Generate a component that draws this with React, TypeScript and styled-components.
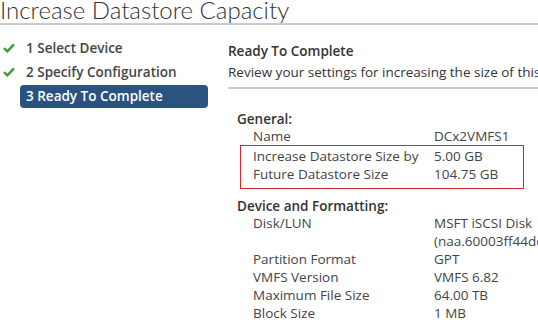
import styled, { createGlobalStyle } from 'styled-components';

const GlobalStyle = createGlobalStyle`
  html, body {
    margin: 0;
    padding: 0;
    background: #fff;
  }
  body {
    font-family: 'Open Sans', Lato, sans-serif;
    color: #333;
    overflow: hidden;
  }
`;

const Page = styled.div`
  width: 538px;
  height: 323px;
  overflow: hidden;
`;

const Title = styled.h1`
  margin: 0;
  height: 23px;
  font-family: Lato, 'Open Sans', sans-serif;
  font-size: 24px;
  font-weight: 300;
  line-height: 20px;
  color: #333;
  white-space: nowrap;
  border-bottom: 2px solid #ccc;
`;

const Body = styled.div`
  display: grid;
  grid-template-columns: 208px 1fr;
  column-gap: 20px;
`;

const Nav = styled.nav`
  display: flex;
  flex-direction: column;
  padding-top: 11px;
`;

const NavItem = styled.div`
  display: flex;
  align-items: center;
  height: 24px;
`;

const CheckSlot = styled.span`
  width: 20px;
  display: flex;
  justify-content: center;
  padding-right: 2px;
  box-sizing: border-box;
`;

const NavLabel = styled.span<{ $active?: boolean }>`
  flex: 1;
  height: 23px;
  line-height: 23px;
  padding-left: 6px;
  border-radius: 4px;
  font-size: 13.5px;
  font-weight: 600;
  color: ${(p) => (p.$active ? '#fff' : '#454545')};
  background: ${(p) => (p.$active ? '#2a5380' : 'transparent')};
  white-space: nowrap;
`;

const Content = styled.section`
  padding-top: 17px;
  min-width: 0;
`;

const Heading = styled.div`
  font-size: 13.5px;
  font-weight: 600;
  line-height: 18px;
  color: #333;
`;

const Intro = styled.div`
  margin-top: 3px;
  padding-bottom: 6px;
  font-size: 13.5px;
  line-height: 18px;
  color: #333;
  white-space: nowrap;
  border-bottom: 2px solid #ccc;
`;

const Group = styled.div<{ $gap: number }>`
  margin-top: ${(p) => p.$gap}px;
  padding-left: 9px;
`;

const GroupTitle = styled.div`
  font-size: 13.5px;
  font-weight: 600;
  line-height: 16px;
  color: #333;
`;

const Row = styled.div`
  display: grid;
  grid-template-columns: 181px 160px;
  padding-left: 16px;
  font-size: 13.5px;
  line-height: 18px;
  color: #444;
`;

const Value = styled.span`
  white-space: normal;
`;

const Highlight = styled.div`
  width: 282px;
  margin-left: 3px;
  padding: 1px 0 5px 0;
  border: 1px solid #d9262e;

  ${Row} {
    padding-left: 12px;
  }
`;

const Check = () => (
  <svg width="12" height="10" viewBox="0 0 12 10">
    <path d="M1 5.2 L4.3 8.4 L11 1.4" fill="none" stroke="#3d9a3c" strokeWidth="2.4" />
  </svg>
);

const steps = [
  { label: '1 Select Device', done: true },
  { label: '2 Specify Configuration', done: true },
  { label: '3 Ready To Complete', active: true },
];

const device = [
  ['Disk/LUN', 'MSFT iSCSI Disk (naa.60003ff44dc75adcb26ffa1b6d3f1e4a)'],
  ['Partition Format', 'GPT'],
  ['VMFS Version', 'VMFS 6.82'],
  ['Maximum File Size', '64.00 TB'],
  ['Block Size', '1 MB'],
];

export default function App() {
  return (
    <Page>
      <GlobalStyle />
      <Title>Increase Datastore Capacity</Title>
      <Body>
        <Nav>
          {steps.map((s) => (
            <NavItem key={s.label}>
              <CheckSlot>{s.done && <Check />}</CheckSlot>
              <NavLabel $active={s.active}>{s.label}</NavLabel>
            </NavItem>
          ))}
        </Nav>
        <Content>
          <Heading>Ready To Complete</Heading>
          <Intro>Review your settings for increasing the size of this datastore.</Intro>
          <Group $gap={22}>
            <GroupTitle>General:</GroupTitle>
            <Row>
              <span>Name</span>
              <Value>DCx2VMFS1</Value>
            </Row>
            <Highlight>
              <Row>
                <span>Increase Datastore Size by</span>
                <Value>5.00 GB</Value>
              </Row>
              <Row>
                <span>Future Datastore Size</span>
                <Value>104.75 GB</Value>
              </Row>
            </Highlight>
          </Group>
          <Group $gap={9}>
            <GroupTitle>Device and Formatting:</GroupTitle>
            {device.map(([k, v]) => (
              <Row key={k}>
                <span>{k}</span>
                <Value>{v}</Value>
              </Row>
            ))}
          </Group>
        </Content>
      </Body>
    </Page>
  );
}
